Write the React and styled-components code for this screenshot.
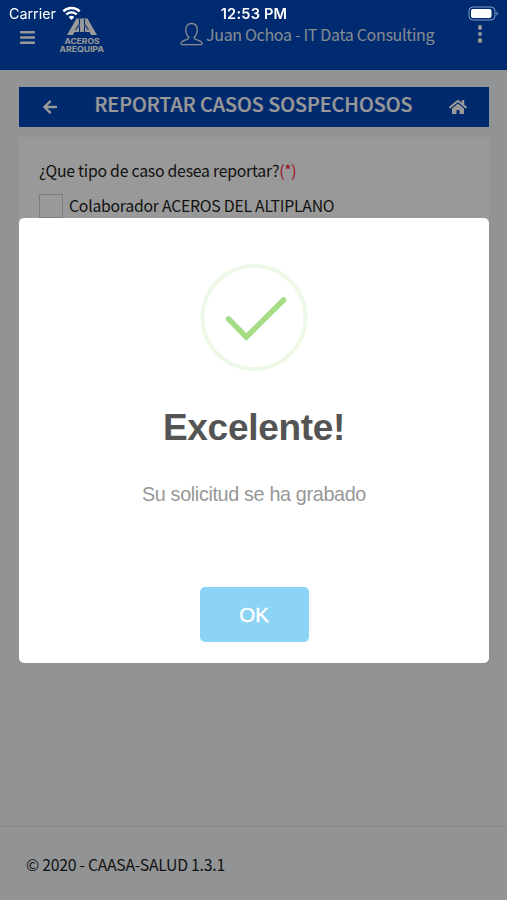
import React from "react"
import styled, { createGlobalStyle } from "styled-components"
import { FaArrowLeft, FaHome, FaBars } from "react-icons/fa"

const GlobalStyle = createGlobalStyle`
  * {
    box-sizing: border-box;
  }
  body {
    margin: 0;
    background: #f3f6f9;
    color: #1c1d20;
    font-family: "Noto Sans CJK JP", "Noto Sans", sans-serif;
  }
`

const Page = styled.div`
  display: flex;
  flex-direction: column;
  height: 900px;
  overflow: hidden;
`

const StatusBar = styled.div`
  position: fixed;
  z-index: 20;
  top: 0;
  left: 0;
  right: 0;
  height: 26px;
  padding: 1px 8px 0 9px;
  display: grid;
  grid-template-columns: 1fr auto 1fr;
  align-items: center;
  color: #fff;
  font-family: Inter, sans-serif;
  font-size: 14.3px;
`

const Carrier = styled.div`
  display: flex;
  align-items: center;
  gap: 6px;
`

const Clock = styled.span`
  font-weight: 600;
  font-size: 14.6px;
  letter-spacing: 0.2px;
`

const BatteryIcon = styled.svg`
  justify-self: end;
`

const Header = styled.header`
  flex: none;
  height: 70px;
  padding: 15px 21px 0 19px;
  display: flex;
  align-items: flex-start;
  background: #0048bc;
  color: #fff;
`

const MenuButton = styled.div`
  width: 38px;
  padding-top: 14px;
  line-height: 0;
`

const Logo = styled.svg`
  flex: none;
`

const UserInfo = styled.div`
  margin-left: 73px;
  padding-top: 4px;
  display: flex;
  align-items: center;
  gap: 3px;
  font-size: 16px;
  letter-spacing: -0.32px;
  line-height: 30px;
  white-space: nowrap;
  color: #dfe6f2;
`

const MoreButton = styled.div`
  margin-left: auto;
  padding: 10px 4px 0 0;
  display: flex;
  flex-direction: column;
  gap: 2px;
`

const Dot = styled.span`
  width: 4.5px;
  height: 4.5px;
  border-radius: 50%;
  background: #fff;
`

const Content = styled.main`
  flex: 1;
  padding: 16.5px 18px 0 19px;
`

const TitleBar = styled.div`
  height: 40px;
  padding: 0 22px 0 23px;
  display: flex;
  align-items: center;
  justify-content: space-between;
  background: #0046b6;
  color: #fff;
  font-size: 17px;
  line-height: 0;
`

const Title = styled.h1`
  margin: 0;
  padding-bottom: 6px;
  font-size: 19.7px;
  line-height: 30px;
  font-weight: 500;
  white-space: nowrap;
  -webkit-text-stroke: 0.2px #fff;
`

const Card = styled.section`
  height: 480px;
  margin-top: 10px;
  padding: 21px 20px;
  background: #fff;
`

const Question = styled.div`
  font-size: 15.8px;
  letter-spacing: -0.24px;
  line-height: 26px;
  white-space: nowrap;
`

const Required = styled.span`
  color: #ff1f3c;
`

const Option = styled.label`
  margin-top: 9px;
  display: flex;
  align-items: center;
  gap: 6px;
  font-size: 15.8px;
  letter-spacing: -0.25px;
  line-height: 26px;
  white-space: nowrap;
`

const Checkbox = styled.span`
  width: 24px;
  height: 24px;
  border: 1px solid #cfcfcf;
`

const Footer = styled.footer`
  flex: none;
  height: 74px;
  padding: 25px 26px;
  border-top: 1px solid #e2e5e8;
  font-size: 15.8px;
  letter-spacing: -0.26px;
  line-height: 26px;
`

const Overlay = styled.div`
  position: fixed;
  z-index: 10;
  inset: 0;
  padding: 218px 18px 0 19px;
  background: rgba(0, 0, 0, 0.4);
`

const Modal = styled.div`
  height: 445px;
  padding-top: 45px;
  display: flex;
  flex-direction: column;
  align-items: center;
  background: #fff;
  border-radius: 5px;
  font-family: "Liberation Sans", sans-serif;
`

const ModalTitle = styled.h2`
  margin: 34px 0 0;
  font-size: 37px;
  letter-spacing: -0.3px;
  line-height: 46px;
  font-weight: 700;
  color: #545454;
  white-space: nowrap;
`

const ModalText = styled.p`
  margin: 30px 0 0;
  font-size: 19.8px;
  letter-spacing: -0.35px;
  line-height: 26px;
  color: #979797;
  white-space: nowrap;
`

const ConfirmButton = styled.button`
  width: 109px;
  height: 55px;
  margin-top: 80px;
  padding: 1px 0 0;
  border: 0;
  border-radius: 5px;
  background: #8cd4f5;
  color: #fff;
  font-family: inherit;
  font-size: 20.5px;
  -webkit-text-stroke: 0.4px #fff;
`

const Wifi = () => (
  <svg width="19" height="15" viewBox="0 0 19 15" fill="none" stroke="#fff" strokeWidth="2.4">
    <path d="M1.300 5.300a11.800 11.800 0 0 1 16.400 0M4.300 8.500a7.500 7.500 0 0 1 10.400 0" />
    <path d="M6.700 11a4 4 0 0 1 5.600 0L9.500 14z" fill="#fff" stroke="none" />
  </svg>
)

const Battery = () => (
  <BatteryIcon width="31" height="15" viewBox="0 0 31 15">
    <rect x="1" y="1" width="26" height="13" rx="4" fill="none" stroke="#7f9bc9" />
    <rect x="3" y="3" width="20.5" height="9" rx="2" fill="#fff" />
    <path d="M28.500 5.500v4c1.800-.5 1.800-3.500 0-4z" fill="#7f9bc9" />
  </BatteryIcon>
)

const AcerosLogo = () => (
  <Logo width="50" height="40" viewBox="0 0 50 40">
    <path d="M19.500 3.500h11L40 20h-6l-1.500-3h-15L16 20h-6z" fill="#fff" />
    <path
      d="M22.500 4v5l-4 6M27.500 4v5l4 6M22.500 11v9M27.500 11v9"
      fill="none"
      stroke="#0048bc"
      strokeWidth="1.100"
    />
    <g fill="#fff" fontFamily="Inter, sans-serif" fontSize="7.3" fontWeight="700">
      <text x="7.500" y="28.800" textLength="35" lengthAdjust="spacingAndGlyphs">
        ACEROS
      </text>
      <text x="2.500" y="36.600" textLength="44.500" lengthAdjust="spacingAndGlyphs">
        AREQUIPA
      </text>
    </g>
  </Logo>
)

const UserIcon = () => (
  <svg width="23" height="25" viewBox="0 0 23 25" fill="none" stroke="#e4eaf4" strokeWidth="1.3">
    <path d="M8.700 15C6.800 13.600 5.800 11 5.800 7.700c0-4 2.200-6.200 5.700-6.200s5.700 2.200 5.700 6.200c0 3.300-1 5.900-2.900 7.300-.4 1.700.7 2.300 2.700 2.800 3.200.8 5 1.800 5 3.900 0 .6-.5 1-1 1H2c-.6 0-1-.4-1-1 0-2.100 1.800-3.100 5-3.900 2-.5 3.100-1.100 2.700-2.800z" />
  </svg>
)

const SuccessIcon = () => (
  <svg width="108" height="108" viewBox="0 0 108 108" fill="none">
    <circle cx="54" cy="54.500" r="51.500" stroke="#edf8e7" strokeWidth="4" />
    <path
      d="M28.500 55.800L46.300 74L83.500 37"
      stroke="#a5dc86"
      strokeWidth="5.5"
      strokeLinecap="round"
    />
  </svg>
)

const App = () => (
  <>
    <GlobalStyle />
    <StatusBar>
      <Carrier>
        Carrier
        <Wifi />
      </Carrier>
      <Clock>12:53 PM</Clock>
      <Battery />
    </StatusBar>
    <Page>
      <Header>
        <MenuButton>
          <FaBars size={17} />
        </MenuButton>
        <AcerosLogo />
        <UserInfo>
          <UserIcon />
          Juan Ochoa - IT Data Consulting
        </UserInfo>
        <MoreButton>
          <Dot />
          <Dot />
          <Dot />
        </MoreButton>
      </Header>
      <Content>
        <TitleBar>
          <FaArrowLeft size={16} />
          <Title>REPORTAR CASOS SOSPECHOSOS</Title>
          <FaHome size={18} />
        </TitleBar>
        <Card>
          <Question>
            ¿Que tipo de caso desea reportar?<Required>(*)</Required>
          </Question>
          <Option>
            <Checkbox />
            Colaborador ACEROS DEL ALTIPLANO
          </Option>
        </Card>
      </Content>
      <Footer>© 2020 - CAASA-SALUD 1.3.1</Footer>
    </Page>
    <Overlay>
      <Modal>
        <SuccessIcon />
        <ModalTitle>Excelente!</ModalTitle>
        <ModalText>Su solicitud se ha grabado</ModalText>
        <ConfirmButton>OK</ConfirmButton>
      </Modal>
    </Overlay>
  </>
)

export default App
